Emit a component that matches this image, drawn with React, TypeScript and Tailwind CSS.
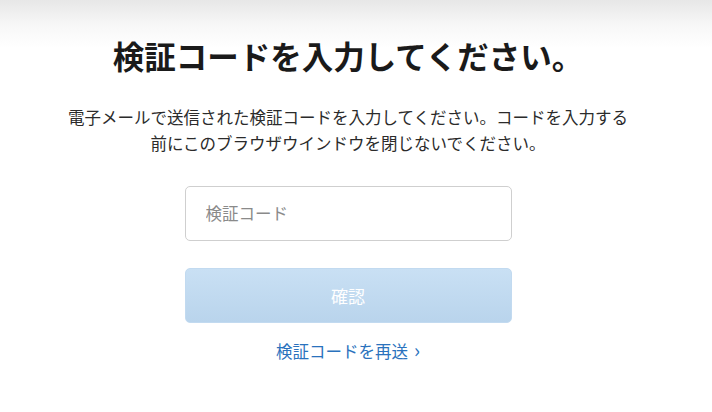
const jp = '"Noto Sans CJK JP", "Noto Sans", sans-serif'

export default function App() {
  return (
    <div
      className="w-full h-[412px] bg-[linear-gradient(to_bottom,#e7e7e7_0px,#f7f7f7_25px,#ffffff_48px)] text-[#1c1c1c]"
      style={{ fontFamily: jp }}
    >
      <div className="flex flex-col items-center pr-4 pt-[36px]">
        <h1 className="text-[31.5px] font-bold leading-[38px] text-[#1a1a1a]">
          検証コードを入力してください。
        </h1>

        <p className="mt-[30px] w-[568px] text-center text-[16.5px] leading-[26px] text-[#2b2b2b]">
          電子メールで送信された検証コードを入力してください。コードを入力する前にこのブラウザウインドウを閉じないでください。
        </p>

        <div className="mt-[30px] w-[327px] h-[55px] rounded-[5px] border border-[#cfcfcf] bg-white flex items-center px-5">
          <input
            type="text"
            placeholder="検証コード"
            className="w-full outline-none text-[16.5px] text-[#333] placeholder:text-[#8a8a8a] bg-transparent"
          />
        </div>

        <button className="mt-[27px] w-[327px] h-[55px] rounded-[5px] bg-[linear-gradient(to_bottom,#c9e0f4,#b9d4ec)] text-white text-[17px] border border-[#c2daf0]">
          確認
        </button>

        <a href="#" className="mt-[16px] leading-[24px] text-[16.5px] text-[#2a72bd] flex items-center gap-[6px]">
          検証コードを再送
          <span className="text-[20px] leading-[24px] -mt-[2px]">›</span>
        </a>
      </div>
    </div>
  )
}
